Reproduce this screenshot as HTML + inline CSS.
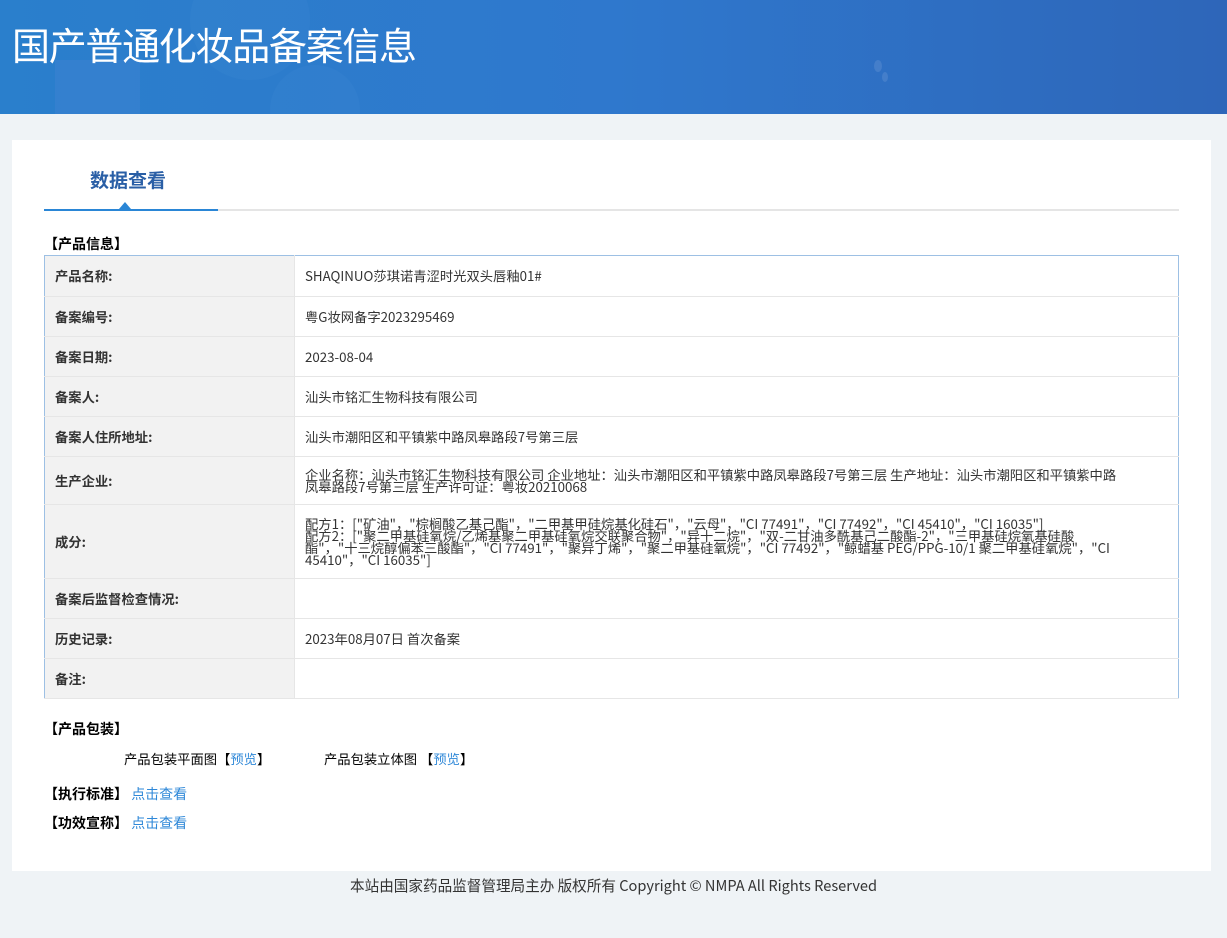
<!DOCTYPE html>
<html><head><meta charset="utf-8"><style>
*{margin:0;padding:0;box-sizing:border-box}
body{width:1227px;height:938px;background:#eff3f6;font-family:"Noto Sans CJK SC","Liberation Sans",sans-serif;color:#333;font-size:13.3px;position:relative;overflow:hidden}
.hd{position:absolute;left:0;top:0;width:1227px;height:114px;background:linear-gradient(90deg,#2a7fcc 0%,#2f78cd 50%,#2e66b9 100%);overflow:hidden}
.hd h1{position:absolute;left:12px;top:16px;font-size:38px;font-weight:normal;color:#fff;letter-spacing:-1.3px}
.card{position:absolute;left:12px;top:140px;width:1199px;height:731px;background:#fff}
.tab{position:absolute;left:78px;top:27px;font-size:19px;font-weight:bold;color:#2a5fa6;line-height:26px}
.line{position:absolute;left:32px;top:69px;width:1135px;height:2px;background:#e5e5e5}
.line i{position:absolute;left:0;top:0;width:174px;height:2px;background:#2a86d6}
.tri{position:absolute;left:107px;top:62px;border-left:6px solid transparent;border-right:6px solid transparent;border-bottom:7px solid #2a86d6}
.sec{position:absolute;font-weight:bold;color:#000;font-size:14px;line-height:16px}
table{position:absolute;left:32px;top:115px;width:1135px;border-collapse:collapse;border:1px solid #9dc0e4}
td{border-bottom:1px solid #e6e6e6;vertical-align:middle;padding:0 10px;line-height:12px}
td.l{width:250px;background:#f2f2f2;font-weight:bold;border-right:1px solid #e6e6e6}
a{color:#2f88d8;text-decoration:none}
.ft{position:absolute;top:877px;width:100%;text-align:center;font-size:14.6px;color:#333;line-height:18px}
</style></head><body>
<div class="hd">
<div style="position:absolute;left:190px;top:-40px;width:120px;height:120px;border-radius:50%;background:rgba(255,255,255,0.025)"></div>
<div style="position:absolute;left:55px;top:60px;width:85px;height:60px;background:rgba(120,150,230,0.12)"></div>
<div style="position:absolute;left:270px;top:65px;width:90px;height:90px;border-radius:50%;background:rgba(255,255,255,0.025)"></div>
<div style="position:absolute;left:874px;top:60px;width:8px;height:12px;border-radius:50%;background:rgba(255,255,255,0.1)"></div>
<div style="position:absolute;left:882px;top:72px;width:6px;height:10px;border-radius:50%;background:rgba(255,255,255,0.1)"></div>
<h1>国产普通化妆品备案信息</h1></div>
<div class="card">
<div class="tab">数据查看</div>
<div class="tri"></div>
<div class="line"><i></i></div>
<div class="sec" style="left:32px;top:96px">【产品信息】</div>
<table>
<tr style="height:41px"><td class="l">产品名称:</td><td>SHAQINUO莎琪诺青涩时光双头唇釉01#</td></tr>
<tr style="height:40px"><td class="l">备案编号:</td><td>粤G妆网备字2023295469</td></tr>
<tr style="height:40px"><td class="l">备案日期:</td><td>2023-08-04</td></tr>
<tr style="height:40px"><td class="l">备案人:</td><td>汕头市铭汇生物科技有限公司</td></tr>
<tr style="height:40px"><td class="l">备案人住所地址:</td><td>汕头市潮阳区和平镇紫中路凤皋路段7号第三层</td></tr>
<tr style="height:48px"><td class="l">生产企业:</td><td>企业名称：汕头市铭汇生物科技有限公司 企业地址：汕头市潮阳区和平镇紫中路凤皋路段7号第三层 生产地址：汕头市潮阳区和平镇紫中路<br>凤皋路段7号第三层 生产许可证：粤妆20210068</td></tr>
<tr style="height:74px"><td class="l">成分:</td><td>配方1：["矿油"，"棕榈酸乙基己酯"，"二甲基甲硅烷基化硅石"，"云母"，"CI 77491"，"CI 77492"，"CI 45410"，"CI 16035"]<br>配方2：["聚二甲基硅氧烷/乙烯基聚二甲基硅氧烷交联聚合物"，"异十二烷"，"双-二甘油多酰基己二酸酯-2"，"三甲基硅烷氧基硅酸<br>酯"，"十三烷醇偏苯三酸酯"，"CI 77491"，"聚异丁烯"，"聚二甲基硅氧烷"，"CI 77492"，"鲸蜡基 PEG/PPG-10/1 聚二甲基硅氧烷"，"CI<br>45410"，"CI 16035"]</td></tr>
<tr style="height:40px"><td class="l">备案后监督检查情况:</td><td></td></tr>
<tr style="height:40px"><td class="l">历史记录:</td><td>2023年08月07日 首次备案</td></tr>
<tr style="height:40px"><td class="l">备注:</td><td></td></tr>
</table>
<div class="sec" style="left:32px;top:581px">【产品包装】</div>
<div style="position:absolute;left:112px;top:610px;color:#000;line-height:18px">产品包装平面图【<a>预览</a>】</div>
<div style="position:absolute;left:312px;top:610px;color:#000;line-height:18px">产品包装立体图 【<a>预览</a>】</div>
<div class="sec" style="left:32px;top:646px">【执行标准】 <a style="font-weight:normal">点击查看</a></div>
<div class="sec" style="left:32px;top:675px">【功效宣称】 <a style="font-weight:normal">点击查看</a></div>
</div>
<div class="ft">本站由国家药品监督管理局主办 版权所有 Copyright © NMPA All Rights Reserved</div>
</body></html>
